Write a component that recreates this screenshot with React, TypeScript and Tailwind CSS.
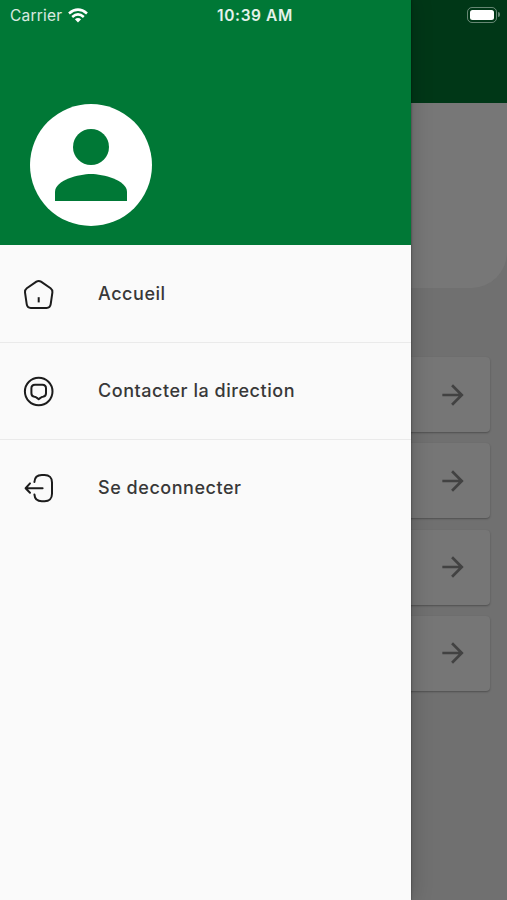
import type { ReactNode } from "react";

function HomeIcon() {
  return (
    <svg className="h-8 w-8 shrink-0" viewBox="0 0 32 32" fill="none" stroke="currentColor" strokeWidth="2" strokeLinecap="round" strokeLinejoin="round">
      <path d="M13.4 2.6Q15.7 1.2 18 2.6L27.6 9.3Q29.7 10.9 29.4 13.3L27.7 25.2Q27.1 29 23.6 29H7.8Q4.3 29 3.7 25.2L2 13.3Q1.7 10.9 3.8 9.3Z" />
      <path d="M15.7 18.2V23.4" strokeLinecap="butt" />
    </svg>
  );
}

function ContactIcon() {
  return (
    <svg className="h-8 w-8 shrink-0" viewBox="0 0 32 32" fill="none" stroke="currentColor" strokeWidth="2" strokeLinecap="round" strokeLinejoin="round">
      <circle cx="15.7" cy="15.5" r="13.8" />
      <path d="M12 8.7H19.4Q23 8.7 23 12.3V17.3Q23 20.5 19.9 20.8Q18.5 20.9 17.4 21.9L15.7 23.2L14 21.9Q12.9 20.9 11.5 20.8Q8.4 20.5 8.4 17.3V12.3Q8.4 8.7 12 8.7Z" />
    </svg>
  );
}

function LogoutIcon() {
  return (
    <svg className="h-8 w-8 shrink-0" viewBox="0 0 32 32" fill="none" stroke="currentColor" strokeWidth="2" strokeLinecap="round" strokeLinejoin="round">
      <path d="M11.4 9C11.6 4.6 14.5 2 18.8 2H21.6C26.2 2 29 4.9 29 9.4V20.8C29 25.4 26.2 28.3 21.6 28.3H18.8C14.5 28.3 11.7 25.7 11.4 21.4" />
      <path d="M19.6 15.2H3.2M7 10.4L2.6 15.2L7 19.8" />
    </svg>
  );
}

function ArrowIcon() {
  return (
    <svg className="h-8 w-8" viewBox="0 0 24 24" fill="currentColor">
      <path d="M12 4l-1.41 1.41L16.17 11H4v2h12.17l-5.58 5.59L12 20l8-8z" />
    </svg>
  );
}

function DrawerItem({ icon, label }: { icon: ReactNode; label: string }) {
  return (
    <li className="flex h-[97px] items-center gap-[43px] border-b border-[#eaeaea] pl-[23px] text-[#1c1c1c] last:border-b-0">
      <span className="pt-px">{icon}</span>
      <span className="pb-px text-[18px] leading-6 font-medium tracking-[0.54px] whitespace-nowrap text-[#383838]">{label}</span>
    </li>
  );
}

function Drawer() {
  return (
    <aside className="absolute inset-y-0 left-0 flex w-[411px] flex-col bg-[#fafafa] shadow-[0_0_20px_rgba(0,0,0,0.22),0_0_2px_rgba(0,0,0,0.5)]">
      <div className="h-[245px] bg-[#007836] pt-[104px] pl-[30px]">
        <div className="flex h-[122px] w-[122px] items-center justify-center rounded-full bg-white">
          <svg className="h-[108px] w-[108px] fill-[#007836]" viewBox="0 0 24 24">
            <circle cx="12" cy="8" r="4" />
            <path d="M12 14c-2.67 0-8 1.34-8 4v2h16v-2c0-2.66-5.33-4-8-4z" />
          </svg>
        </div>
      </div>
      <ul className="pt-px">
        <DrawerItem icon={<HomeIcon />} label="Accueil" />
        <DrawerItem icon={<ContactIcon />} label="Contacter la direction" />
        <DrawerItem icon={<LogoutIcon />} label="Se deconnecter" />
      </ul>
    </aside>
  );
}

function StatusBar() {
  return (
    <div className="absolute inset-x-0 top-0 flex h-[30px] items-center justify-between pr-[7px] pl-[9px] text-white">
      <div className="flex flex-1 items-center gap-[6px] pl-px">
        <span className="pt-px text-[15.5px] tracking-[0.2px] text-white/85">Carrier</span>
        <svg className="h-[15px] w-5" viewBox="0 0 20 15" fill="none" stroke="currentColor" strokeWidth="2.6">
          <path d="M1 5.5Q10-2.2 19 5.5" />
          <path d="M4.2 8.9Q10 4 15.8 8.9" />
          <path d="M6.9 11.2Q10 8.6 13.1 11.2L10 14.5Z" fill="currentColor" stroke="none" />
        </svg>
      </div>
      <span className="pt-px text-[15.5px] font-semibold tracking-[0.6px] whitespace-nowrap text-white/90">10:39 AM</span>
      <div className="flex flex-1 items-center justify-end gap-px pb-px">
        <div className="h-[16px] w-[30px] rounded-[5px] border border-white/40 p-[2px]">
          <div className="h-full w-full rounded-[2.5px] bg-white" />
        </div>
        <div className="h-[5px] w-[2px] rounded-r-full bg-white/40" />
      </div>
    </div>
  );
}

export default function App() {
  return (
    <div className="relative h-[900px] w-[507px] overflow-hidden bg-[#707070] font-['Inter',sans-serif]">
      <div className="h-[103px] bg-[#003717]" />
      <div className="h-[185px] rounded-br-[36px] bg-[#777777]" />
      <div className="flex flex-col gap-[11.3px] pt-[69px] pr-[17px] pl-[17px]">
        {[0, 1, 2, 3].map((row) => (
          <div
            key={row}
            className="flex h-[75px] items-center justify-end rounded-[4px] bg-[#767676] pr-[21px] text-[#424242] shadow-[0_1px_2px_rgba(0,0,0,0.3)]"
          >
            <ArrowIcon />
          </div>
        ))}
      </div>
      <Drawer />
      <StatusBar />
    </div>
  );
}
